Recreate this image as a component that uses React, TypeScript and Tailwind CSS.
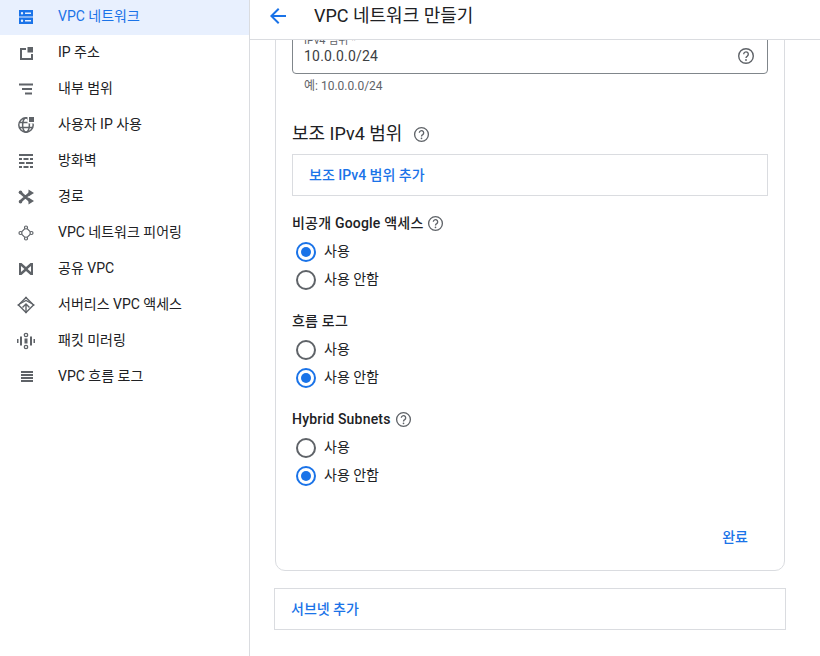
import React from "react";

const font = "font-['Roboto','Noto_Sans_CJK_KR',sans-serif]";

const I = ({ children }: { children: React.ReactNode }) => (
  <svg width="24" height="24" viewBox="0 0 24 24" fill="currentColor" className="shrink-0">
    {children}
  </svg>
);

const icons: React.ReactNode[] = [
  <I key="a">
    <path fillRule="evenodd" d="M5 5h14v6.500H5zM5 12.500h14V19H5zM8 7a1.200 1.200 0 1 0 .01 2.400A1.200 1.200 0 0 0 8 7zm3 .500V9h6V7.500zM8 14.500a1.200 1.200 0 1 0 .01 2.400A1.200 1.200 0 0 0 8 14.500zm3 .500v1.500h6V15z" />
  </I>,
  <I key="b">
    <path fillRule="evenodd" d="M6 7h6v2H8v8h9v-4h2v6H6zM13.500 6H19v5.500h-5.500z" />
  </I>,
  <I key="c">
    <path d="M5 6.500h14v2H5zM8 11h10v2H8zM11 15.500h7v2h-7z" />
  </I>,
  <I key="d">
    <g fill="none" stroke="currentColor" strokeWidth="1.500">
      <circle cx="12" cy="12" r="7.200" />
      <ellipse cx="12" cy="12" rx="3.400" ry="7.200" />
      <path d="M5 9.500h14M5 14.500h14" />
    </g>
    <path d="M13.500 3h7.500v7.500h-7.500z" fill="#fff" />
    <path d="M15 4h5v5h-5z" />
  </I>,
  <I key="e">
    <path d="M5 5h14v2H5zM5 9h3v2H5zM9.500 9h5v2h-5zM16 9h3v2h-3zM5 13h5.500v2H5zM12 13h7v2h-7zM5 17h3v2H5zM9.500 17h5v2h-5zM16 17h3v2h-3z" />
  </I>,
  <I key="f">
    <g fill="none" stroke="currentColor" strokeWidth="2.600">
      <path d="M6 7.200 16 16M6 16.800 16 8" />
    </g>
    <path d="M14.500 4.500 20 8l-5.500 3.500zM14.500 12.500 20 16l-5.500 3.500z" />
    <circle cx="6.500" cy="7.200" r="1.800" />
    <circle cx="6.500" cy="16.800" r="1.800" />
  </I>,
  <I key="g">
    <g fill="none" stroke="currentColor" strokeWidth="1.200">
      <circle cx="12" cy="6.500" r="1.500" />
      <circle cx="12" cy="17.500" r="1.500" />
      <circle cx="6.500" cy="12" r="1.500" />
      <circle cx="17.500" cy="12" r="1.500" />
      <path d="M10.900 7.600 7.600 10.900M13.100 7.600l3.300 3.300M10.900 16.400 7.600 13.100M13.100 16.400l3.300-3.300" />
    </g>
  </I>,
  <I key="h">
    <path fillRule="evenodd" d="M5 6h2.500l4.500 4 4.500-4H19v12h-2.500L12 14l-4.500 4H5zm2 3v6l3.400-3zm10 0-3.400 3 3.400 3z" />
  </I>,
  <I key="i">
    <g fill="none" stroke="currentColor" strokeWidth="1.400">
      <path d="M12 4.500 19.500 12 12 19.500 4.500 12z" />
      <path d="M5.500 11 12 7.500l6.500 3.500M12 11v8M8.500 14.500 12 11l3.500 3.500" />
    </g>
    <circle cx="12" cy="4.800" r="1" />
    <circle cx="12" cy="19.200" r="1" />
    <circle cx="4.500" cy="12" r="1" />
    <circle cx="19.500" cy="12" r="1" />
  </I>,
  <I key="j">
    <path d="M3 10h1.500v4H3zM6 7.500h2v9H6zM16 7.500h2v9h-2zM19.500 10H21v4h-1.500zM10.500 9.500h3v5h-3z" />
    <g fill="none" stroke="currentColor" strokeWidth="1.300">
      <circle cx="12" cy="6" r="1.700" />
      <circle cx="12" cy="18" r="1.700" />
    </g>
  </I>,
  <I key="k">
    <path d="M7 6h12v2H7zM7 9h12v2H7zM7 12h12v2H7zM7 15h12v2H7z" />
  </I>,
];

const items = [
  "VPC 네트워크", "IP 주소", "내부 범위", "사용자 IP 사용", "방화벽", "경로",
  "VPC 네트워크 피어링", "공유 VPC", "서버리스 VPC 액세스", "패킷 미러링", "VPC 흐름 로그",
];

const Help = ({ size = 18 }: { size?: number }) => (
  <svg width={size} height={size} viewBox="0 0 18 18" className="shrink-0 text-[#5f6368]" fill="none">
    <circle cx="9" cy="9" r="7.300" stroke="currentColor" strokeWidth="1.400" />
    <path d="M6.700 7.200a2.300 2.300 0 1 1 3.600 1.900c-.8.500-1.300 1-1.300 2" stroke="currentColor" strokeWidth="1.400" />
    <circle cx="9" cy="13" r=".9" fill="currentColor" />
  </svg>
);

const Radio = ({ label, on }: { label: string; on?: boolean }) => (
  <div className="flex h-7 items-center pl-1">
    <span className={`flex h-5 w-5 items-center justify-center rounded-full border-2 ${on ? "border-[#1a73e8]" : "border-[#5f6368]"}`}>
      {on && <span className="h-2.5 w-2.5 rounded-full bg-[#1a73e8]" />}
    </span>
    <span className="ml-2 -mt-[2px] text-[14px] leading-5 text-[#202124]">{label}</span>
  </div>
);

const Group = ({ title, help, first, className, radios }: { title: string; help?: boolean; first: boolean; className: string; radios: string }) => (
  <div className={className}>
    <div className="flex h-5 items-center gap-[4px] text-[14px] font-medium tracking-[0.2px] text-[#202124]">
      {title}
      {help && <Help size={17} />}
    </div>
    <div className={radios}>
      <Radio label="사용" on={first} />
      <Radio label="사용 안함" on={!first} />
    </div>
  </div>
);

export default function App() {
  return (
    <div className={`${font} flex h-[656px] w-[820px] overflow-hidden bg-white`}>
      <aside className="w-[250px] shrink-0 border-r border-[#dadce0]">
        <ul className="-mt-px">
          {items.map((t, i) => (
            <li
              key={t}
              className={`flex h-9 items-center pl-[14px] text-[14px] ${i === 0 ? "bg-[#e8f0fe] text-[#1a73e8]" : "text-[#202124]"}`}
            >
              <span className={`flex w-6 justify-center ${i === 0 ? "text-[#1a73e8]" : "text-[#5f6368]"}`}>
                {icons[i]}
              </span>
              <span className="ml-5 -mt-[2px]">{t}</span>
            </li>
          ))}
        </ul>
      </aside>
      <main className="flex min-w-0 flex-1 flex-col">
        <header className="relative z-10 flex h-10 shrink-0 items-center border-b border-[#dadce0] bg-white pl-4">
          <svg width="24" height="24" viewBox="0 0 24 24" className="-mt-[8px] text-[#1a73e8]" fill="currentColor">
            <path d="M20 11H7.830l5.590-5.590L12 4l-8 8 8 8 1.410-1.410L7.830 13H20z" />
          </svg>
          <h1 className="-mt-[8px] ml-6 text-[18px] font-normal text-[#202124]">VPC 네트워크 만들기</h1>
        </header>
        <div className="flex-1 overflow-hidden pl-[25px] pr-[35px]">
          <section className="-mt-[30px] h-[561px] rounded-[10px] border border-[#dadce0] px-4 pt-[30px]">
            <div className="relative -mt-[30px] flex h-[63px] items-end justify-between rounded-[4px] border border-[#80868b] px-[11px] pb-[7px]">
              <span className="text-[14px] leading-5 tracking-[0.2px] text-[#3c4043]">10.0.0.0/24</span>
              <span className="mb-[1px] mr-px"><Help size={18} /></span>
              <span className="absolute left-[11px] top-[21px] text-[11px] leading-4 text-[#5f6368]">IPv4 범위 *</span>
            </div>
            <p className="ml-3 mt-1 text-[12px] leading-4 text-[#5f6368]">예: 10.0.0.0/24</p>
            <div className="mt-[28px] flex h-6 items-center text-[#202124]">
              <span className="text-[18px] leading-6">보조 IPv4 범위</span>
              <span className="ml-[11px]"><Help size={17} /></span>
            </div>
            <div className="mt-2 flex h-[42px] items-center border border-[#dadce0] pl-4 text-[14px] font-medium text-[#1a73e8]">
              보조 IPv4 범위 추가
            </div>
            <Group className="mt-[17px]" radios="mt-[5px]" title="비공개 Google 액세스" help first />
            <Group className="mt-[17px]" radios="mt-[5px]" title="흐름 로그" first={false} />
            <Group className="mt-[17px]" radios="mt-[5px]" title="Hybrid Subnets" help first={false} />
            <div className="mt-[37px] pr-5 text-right text-[14px] font-medium text-[#1a73e8]">완료</div>
          </section>
          <div className="-mx-px mt-[17px] flex h-[42px] items-center border border-[#dadce0] pl-4 text-[14px] font-medium text-[#1a73e8]">
            서브넷 추가
          </div>
        </div>
      </main>
    </div>
  );
}
